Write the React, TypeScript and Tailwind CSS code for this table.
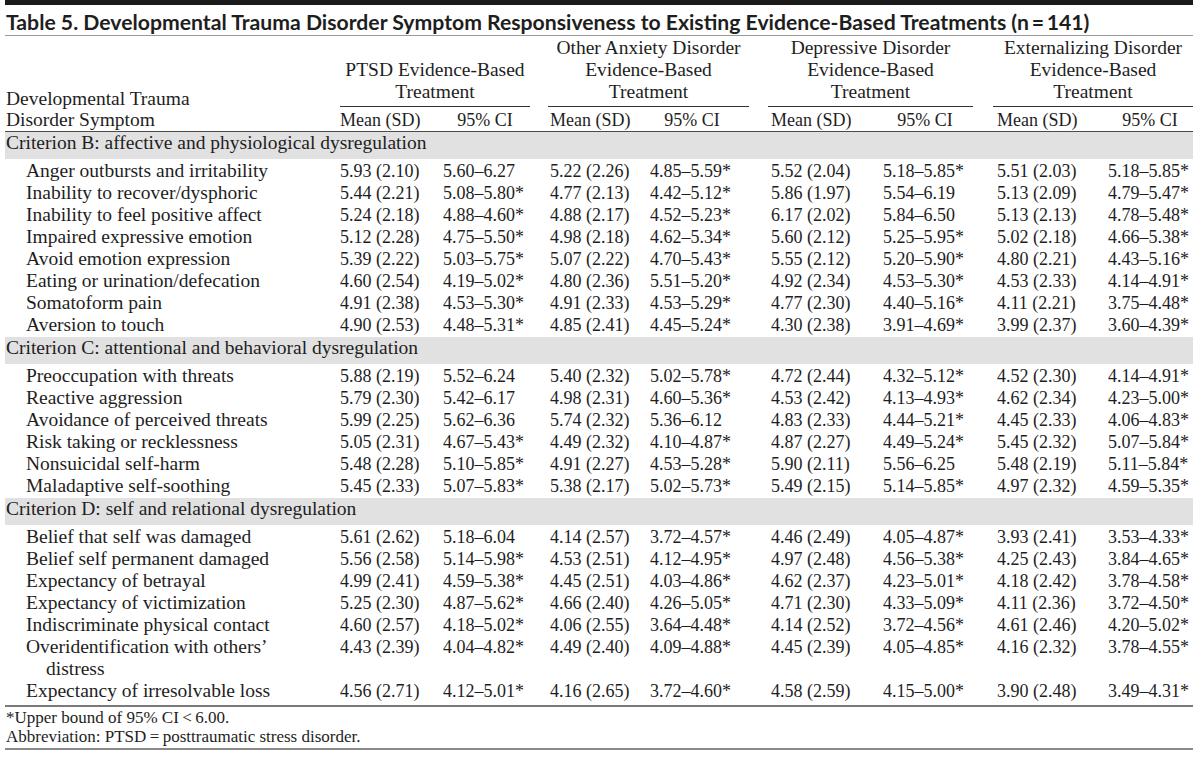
type Row = { label: string; cont?: string; vals: string[] };
type Section = { title: string; rows: Row[] };

// every row of the table uses the same column grid (5px .. 1193px)
const COLS = "grid grid-cols-[335px_103px_107px_100px_121px_112px_114px_111px_85px]";

function r(line: string, cont?: string): Row {
  const parts = line.split("|");
  return { label: parts[0], cont, vals: parts.slice(1) };
}

const sections: Section[] = [
  {
    title: "Criterion B: affective and physiological dysregulation",
    rows: [
      r("Anger outbursts and irritability|5.93 (2.10)|5.60–6.27|5.22 (2.26)|4.85–5.59*|5.52 (2.04)|5.18–5.85*|5.51 (2.03)|5.18–5.85*"),
      r("Inability to recover/dysphoric|5.44 (2.21)|5.08–5.80*|4.77 (2.13)|4.42–5.12*|5.86 (1.97)|5.54–6.19|5.13 (2.09)|4.79–5.47*"),
      r("Inability to feel positive affect|5.24 (2.18)|4.88–4.60*|4.88 (2.17)|4.52–5.23*|6.17 (2.02)|5.84–6.50|5.13 (2.13)|4.78–5.48*"),
      r("Impaired expressive emotion|5.12 (2.28)|4.75–5.50*|4.98 (2.18)|4.62–5.34*|5.60 (2.12)|5.25–5.95*|5.02 (2.18)|4.66–5.38*"),
      r("Avoid emotion expression|5.39 (2.22)|5.03–5.75*|5.07 (2.22)|4.70–5.43*|5.55 (2.12)|5.20–5.90*|4.80 (2.21)|4.43–5.16*"),
      r("Eating or urination/defecation|4.60 (2.54)|4.19–5.02*|4.80 (2.36)|5.51–5.20*|4.92 (2.34)|4.53–5.30*|4.53 (2.33)|4.14–4.91*"),
      r("Somatoform pain|4.91 (2.38)|4.53–5.30*|4.91 (2.33)|4.53–5.29*|4.77 (2.30)|4.40–5.16*|4.11 (2.21)|3.75–4.48*"),
      r("Aversion to touch|4.90 (2.53)|4.48–5.31*|4.85 (2.41)|4.45–5.24*|4.30 (2.38)|3.91–4.69*|3.99 (2.37)|3.60–4.39*"),
    ],
  },
  {
    title: "Criterion C: attentional and behavioral dysregulation",
    rows: [
      r("Preoccupation with threats|5.88 (2.19)|5.52–6.24|5.40 (2.32)|5.02–5.78*|4.72 (2.44)|4.32–5.12*|4.52 (2.30)|4.14–4.91*"),
      r("Reactive aggression|5.79 (2.30)|5.42–6.17|4.98 (2.31)|4.60–5.36*|4.53 (2.42)|4.13–4.93*|4.62 (2.34)|4.23–5.00*"),
      r("Avoidance of perceived threats|5.99 (2.25)|5.62–6.36|5.74 (2.32)|5.36–6.12|4.83 (2.33)|4.44–5.21*|4.45 (2.33)|4.06–4.83*"),
      r("Risk taking or recklessness|5.05 (2.31)|4.67–5.43*|4.49 (2.32)|4.10–4.87*|4.87 (2.27)|4.49–5.24*|5.45 (2.32)|5.07–5.84*"),
      r("Nonsuicidal self-harm|5.48 (2.28)|5.10–5.85*|4.91 (2.27)|4.53–5.28*|5.90 (2.11)|5.56–6.25|5.48 (2.19)|5.11–5.84*"),
      r("Maladaptive self-soothing|5.45 (2.33)|5.07–5.83*|5.38 (2.17)|5.02–5.73*|5.49 (2.15)|5.14–5.85*|4.97 (2.32)|4.59–5.35*"),
    ],
  },
  {
    title: "Criterion D: self and relational dysregulation",
    rows: [
      r("Belief that self was damaged|5.61 (2.62)|5.18–6.04|4.14 (2.57)|3.72–4.57*|4.46 (2.49)|4.05–4.87*|3.93 (2.41)|3.53–4.33*"),
      r("Belief self permanent damaged|5.56 (2.58)|5.14–5.98*|4.53 (2.51)|4.12–4.95*|4.97 (2.48)|4.56–5.38*|4.25 (2.43)|3.84–4.65*"),
      r("Expectancy of betrayal|4.99 (2.41)|4.59–5.38*|4.45 (2.51)|4.03–4.86*|4.62 (2.37)|4.23–5.01*|4.18 (2.42)|3.78–4.58*"),
      r("Expectancy of victimization|5.25 (2.30)|4.87–5.62*|4.66 (2.40)|4.26–5.05*|4.71 (2.30)|4.33–5.09*|4.11 (2.36)|3.72–4.50*"),
      r("Indiscriminate physical contact|4.60 (2.57)|4.18–5.02*|4.06 (2.55)|3.64–4.48*|4.14 (2.52)|3.72–4.56*|4.61 (2.46)|4.20–5.02*"),
      r("Overidentification with others’|4.43 (2.39)|4.04–4.82*|4.49 (2.40)|4.09–4.88*|4.45 (2.39)|4.05–4.85*|4.16 (2.32)|3.78–4.55*", "distress"),
      r("Expectancy of irresolvable loss|4.56 (2.71)|4.12–5.01*|4.16 (2.65)|3.72–4.60*|4.58 (2.59)|4.15–5.00*|3.90 (2.48)|3.49–4.31*"),
    ],
  },
];

function SubHead() {
  return (
    <>
      <div className="pt-[2px]">Mean (SD)</div>
      <div className="pt-[2px]"><div className="w-[84px] text-center">95% CI</div></div>
    </>
  );
}

export default function App() {
  return (
    <div className="min-h-screen bg-white text-[#1e1e1e]">
      <div className="ml-[5px] w-[1188px]">
        <div className="h-[5px] bg-[#1b1b1b]" />
        <h1 className="font-['Lato',sans-serif] font-bold text-[21.2px] leading-[24px] pt-[5px] pb-[1px] pl-[1px] border-b border-[#9a9a9a] whitespace-nowrap">
          Table 5. Developmental Trauma Disorder Symptom Responsiveness to Existing Evidence-Based Treatments (n{"\u2009"}={"\u2009"}141)
        </h1>

        <div className="font-['Liberation_Serif',serif] text-[18px] leading-[22px]">
          {/* header */}
          <div className={`${COLS} border-b border-[#4a4a4a]`}>
            <div className="row-span-2 self-end pl-[1px] pb-[1px] text-[19.5px] leading-[21px]">
              Developmental Trauma
              <br />
              Disorder Symptom
            </div>
            <div className="col-span-2 self-end mr-[20px] pb-[3px] border-b border-[#333] text-center text-[19.5px]">
              PTSD Evidence-Based
              <br />
              Treatment
            </div>
            <div className="col-span-2 self-end ml-[-2px] mr-[22px] pt-[1px] pb-[3px] border-b border-[#333] text-center text-[19.5px] whitespace-nowrap">
              Other Anxiety Disorder
              <br />
              Evidence-Based
              <br />
              Treatment
            </div>
            <div className="col-span-2 self-end ml-[-3px] mr-[24px] pt-[1px] pb-[3px] border-b border-[#333] text-center text-[19.5px]">
              Depressive Disorder
              <br />
              Evidence-Based
              <br />
              Treatment
            </div>
            <div className="col-span-2 self-end ml-[-4px] pt-[1px] pb-[3px] border-b border-[#333] text-center text-[19.5px] whitespace-nowrap">
              Externalizing Disorder
              <br />
              Evidence-Based
              <br />
              Treatment
            </div>
            <SubHead />
            <SubHead />
            <SubHead />
            <SubHead />
          </div>

          {sections.map((s) => (
            <div key={s.title}>
              <div className="h-[27px] bg-[#e1e1e1] pl-[1px] text-[19.5px]">{s.title}</div>
              <div className="py-[1px]">
                {s.rows.map((row) => (
                  <div key={row.label} className={COLS}>
                    <div className="pl-[21px] text-[19.5px]">
                      {row.label}
                      {row.cont && <div className="pl-[20px]">{row.cont}</div>}
                    </div>
                    {row.vals.map((v, i) => (
                      <div key={i} className="whitespace-nowrap">{v}</div>
                    ))}
                  </div>
                ))}
              </div>
            </div>
          ))}

          <div className="mt-[2px] border-t-2 border-[#7a7a7a] border-b-2 border-b-[#8a8a8a] pt-[1px] pb-[2px] text-[17px] leading-[19px] pl-[1px]">
            <div>*Upper bound of 95% CI{"\u2009"}&lt;{"\u2009"}6.00.</div>
            <div>Abbreviation: PTSD{"\u2009"}={"\u2009"}posttraumatic stress disorder.</div>
          </div>
        </div>
      </div>
    </div>
  );
}
